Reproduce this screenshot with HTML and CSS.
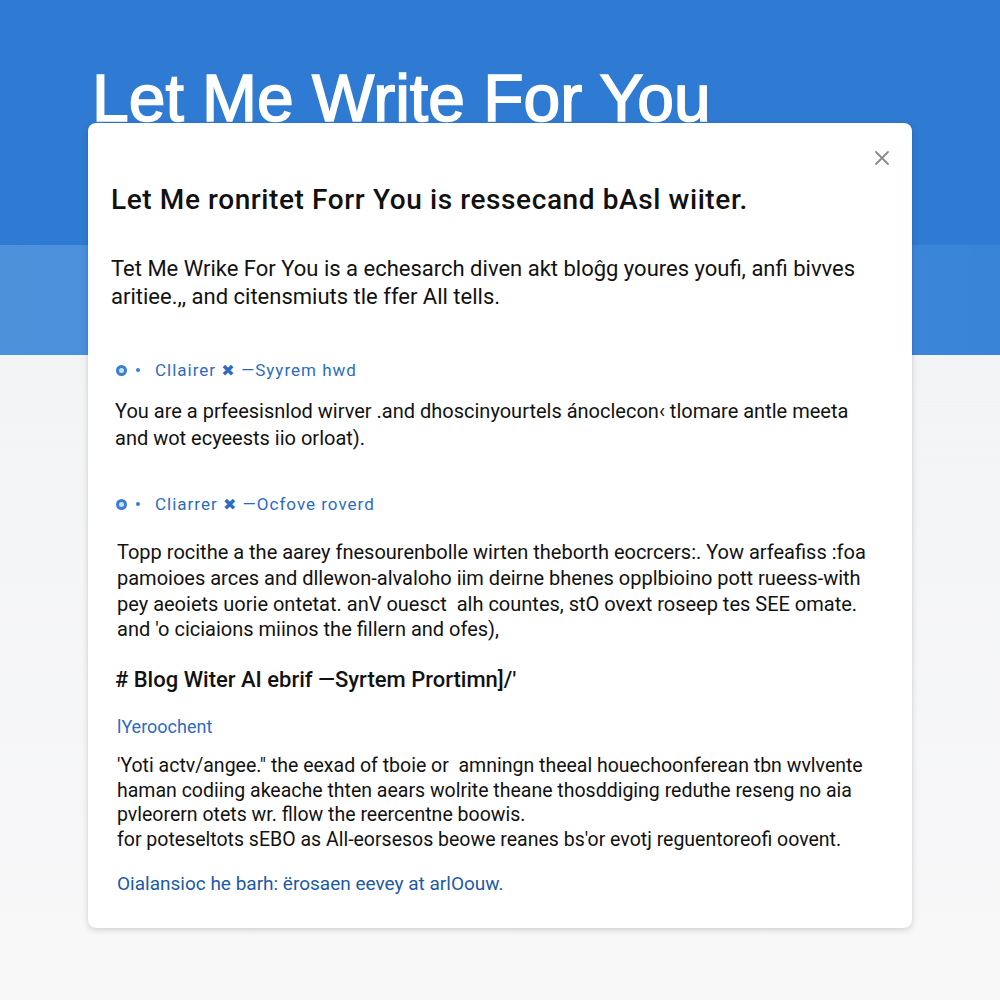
FILE: index.html
```html
<!DOCTYPE html>
<html lang="en">
<head>
<meta charset="utf-8">
<title>Let Me Write For You</title>
<link rel="stylesheet" href="styles.css">
</head>
<body>
<div class="page">
  <h1 class="hero-title">Let Me Write For You</h1>
  <section class="card">
    <button class="close" aria-label="Close">
      <svg width="16" height="16" viewBox="0 0 16 16"><path d="M2 2L14 14M14 2L2 14" stroke="#8a8a8a" stroke-width="1.8" stroke-linecap="round"/></svg>
    </button>
    <h2 class="card-title">Let Me ronritet Forr You is ressecand bAsl wiiter.</h2>
    <p class="lead">Tet Me Wrike For You is a echesarch diven akt bloĝg youres youfi, anfi bivves<br>aritiee.,, and citensmiuts tle ffer All tells.</p>

    <div class="label label-1"><span class="ring"></span><span class="dot"></span><span class="label-text">Cllairer <span class="star">✖</span> —Syyrem hwd</span></div>
    <p class="body body-2">You are a prfeesisnlod wirver .and dhoscinyourtels ánoclecon‹ tlomare antle meeta<br>and wot ecyeests iio orloat).</p>

    <div class="label label-2"><span class="ring"></span><span class="dot"></span><span class="label-text">Cliarrer <span class="star">✖</span> —Ocfove roverd</span></div>
    <p class="body body-3">Topp rocithe a the aarey fnesourenbolle wirten theborth eocrcers:. Yow arfeafiss :foa<br>pamoioes arces and dllewon-alvaloho iim deirne bhenes opplbioino pott rueess-with<br>pey aeoiets uorie ontetat. anV ouesct&nbsp; alh countes, stO ovext roseep tes SEE omate.<br>and 'o ciciaions miinos the fillern and ofes),</p>

    <h3 class="sub-title"># Blog Witer AI ebrif —Syrtem Prortimn]/'</h3>
    <div class="tag">lYeroochent</div>
    <p class="body body-4">'Yoti actv/angee." the eexad of tboie or&nbsp; amningn theeal houechoonferean tbn wvlvente<br>haman codiing akeache thten aears wolrite theane thosddiging reduthe reseng no aia<br>pvleorern otets wr. fllow the reercentne boowis.<br>for poteseltots sEBO as All-eorsesos beowe reanes bs'or evotj reguentoreofi oovent.</p>

    <a class="footer-link" href="#">Oialansioc he barh: ërosaen eevey at arlOouw.</a>
  </section>
</div>
</body>
</html>
```

FILE: styles.css
```css
html, body {
  margin: 0;
  padding: 0;
}
body {
  font-family: Roboto, "Liberation Sans", Arial, sans-serif;
  color: #121212;
}
.page {
  min-height: 1000px;
  box-sizing: border-box;
  padding: 65px 88px 0;
  background:
    linear-gradient(#2f7bd3, #2f7bd3) 0 0 / 100% 245px no-repeat,
    linear-gradient(to right, #4d91db, #3a84d8) 0 245px / 100% 110px no-repeat,
    linear-gradient(#f3f4f6, #f8f8f9) 0 355px / 100% 645px no-repeat;
}
.hero-title {
  margin: 0;
  padding-left: 4px;
  font-family: "Liberation Sans", Arial, sans-serif;
  font-weight: 400;
  font-size: 66px;
  line-height: 66px;
  color: #fff;
  -webkit-text-stroke: 1.6px #fff;
  white-space: nowrap;
}
.card {
  position: relative;
  margin-top: -8px;
  height: 805px;
  box-sizing: border-box;
  padding: 0 20px 0 23px;
  background: #fff;
  border-radius: 8px;
  box-shadow: 0 2px 6px rgba(0, 0, 0, 0.16), 0 0 1px rgba(0, 0, 0, 0.1);
  overflow: hidden;
}
.close {
  position: absolute;
  top: 25px;
  right: 20px;
  width: 20px;
  height: 20px;
  padding: 2px;
  border: 0;
  background: none;
}
.card-title {
  margin: 59px 0 0;
  font-size: 28px;
  line-height: 36px;
  font-weight: 500;
  letter-spacing: 0.6px;
  color: #111;
  white-space: nowrap;
}
.lead {
  margin: 37px 0 0;
  font-size: 22px;
  line-height: 28px;
  white-space: nowrap;
}
.label {
  display: flex;
  align-items: center;
  height: 22px;
  color: #2c6cc0;
  font-size: 17px;
  line-height: 22px;
  letter-spacing: 1px;
}
.label-1 { margin-top: 48px; }
.label-2 { margin-top: 41.5px; }
.ring {
  width: 5px;
  height: 5px;
  margin-left: 5px;
  border: 3px solid #3b7fcf;
  border-radius: 50%;
  background: #cfe0f5;
}
.dot {
  width: 4px;
  height: 4px;
  margin-left: 9px;
  border-radius: 50%;
  background: #3b7fcf;
}
.label-text {
  margin-left: 15px;
  white-space: nowrap;
}
.star {
  font-family: "DejaVu Sans", sans-serif;
  font-size: 16px;
}
.body {
  margin: 0;
  font-size: 20px;
  white-space: nowrap;
  padding-left: 4px;
}
.body-2 { margin-top: 16.5px; line-height: 27px; }
.body-3 { margin-top: 25.1px; line-height: 25.7px; padding-left: 6px; }
.sub-title {
  margin: 23.4px 0 0;
  padding-left: 4px;
  font-size: 22px;
  line-height: 28px;
  font-weight: 500;
  white-space: nowrap;
}
.tag {
  margin-top: 22px;
  padding-left: 6px;
  font-size: 18px;
  line-height: 22px;
  color: #2c6cc0;
}
.body-4 {
  margin-top: 15.5px;
  font-size: 19.5px;
  line-height: 24.7px;
  padding-left: 6px;
}
.footer-link {
  display: block;
  margin-top: 19.4px;
  padding-left: 6px;
  font-size: 19px;
  line-height: 24px;
  color: #1d5aa6;
  text-decoration: none;
}
```
